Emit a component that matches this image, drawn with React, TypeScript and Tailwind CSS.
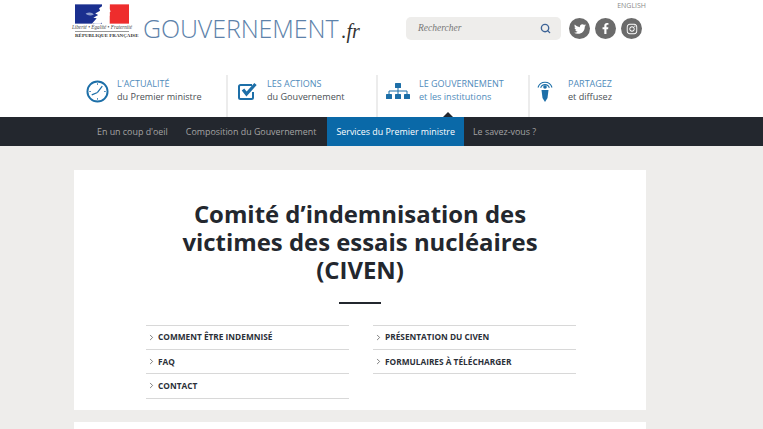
import { ChevronRight, Search } from 'lucide-react';
import { FaFacebookF, FaInstagram, FaTwitter } from 'react-icons/fa';
import type { ReactNode } from 'react';

const sans = "font-['Open_Sans',sans-serif]";

function ClockIcon() {
    return (
        <svg width="23" height="23" viewBox="0 0 24 24" fill="none" stroke="#1d6fa8">
            <circle cx="12" cy="12" r="10.5" strokeWidth="2" />
            <path d="M12 13 L17 6.500 M12 13 L6 15.500" strokeWidth="1.300" />
            <path d="M12 3.500v1.500M12 19v1.500M3.500 12h1.500M19 12h1.500" strokeWidth="1" />
        </svg>
    );
}

function CheckIcon() {
    return (
        <svg width="19" height="18" viewBox="0 0 19 18" fill="none">
            <path d="M15 10v5.500a1.500 1.500 0 0 1-1.500 1.500H2.500A1.500 1.500 0 0 1 1 15.500V4.500A1.500 1.500 0 0 1 2.500 3H14" stroke="#1d6fa8" strokeWidth="2" />
            <path d="M5 7.500 8.500 12 17.500 2" stroke="#1d6fa8" strokeWidth="3.200" />
        </svg>
    );
}

function TreeIcon() {
    return (
        <svg width="24" height="16" viewBox="0 0 24 16" fill="#1d6fa8">
            <rect x="9" y="0" width="6" height="5" rx="0.500" />
            <rect x="0" y="11" width="6" height="5" rx="0.500" />
            <rect x="9" y="11" width="6" height="5" rx="0.500" />
            <rect x="18" y="11" width="6" height="5" rx="0.500" />
            <path d="M12 5v6M3 11V8H21V11" fill="none" stroke="#1d6fa8" />
        </svg>
    );
}

function ShareIcon() {
    return (
        <svg width="16" height="22" viewBox="0 0 16 22" fill="none" stroke="#1d6fa8">
            <path d="M1 7.500a7.300 7.300 0 0 1 14 0" strokeWidth="1.100" />
            <path d="M3.700 7.800a4.500 4.500 0 0 1 8.600 0" strokeWidth="1.100" />
            <circle cx="8" cy="7" r="1.800" fill="#1d6fa8" stroke="none" />
            <path d="M4.500 10h7L10.500 18 8 22 5.500 18Z" fill="#1d6fa8" stroke="none" />
        </svg>
    );
}

function Logo() {
    return (
        <div className="flex w-[56px] flex-col items-center">
            <svg width="54" height="20" viewBox="0 0 56 20">
                <rect width="56" height="20" fill="#fff" />
                <rect width="28" height="20" fill="#1a2f8f" />
                <rect x="36" width="20" height="20" fill="#ee2d2d" />
                <path d="M28 0h8l-.5 4 1.500 3.500-1.500 1 .5 3-3.500 1.500-1 3-5 4h-9l5-5.500-3.500-.5 5-3-3-1.500 5-3-1-2.500 3-2Z" fill="#fff" />
                <path d="M11 9.500c4-2 7-1 8.500 1-3 1.500-6 1.500-8.500-1Z" fill="#8d9ccc" />
            </svg>
            <div className="mt-[1px] text-[5.200px] leading-[5px] whitespace-nowrap font-['Liberation_Serif',serif] italic text-[#444]">
                Liberté • Égalité • Fraternité
            </div>
            <div className="mt-[1px] w-[54px] border-t border-[#999] pt-[1px] text-center text-[5px] leading-[6px] whitespace-nowrap font-['Liberation_Serif',serif] font-bold text-[#333]">
                RÉPUBLIQUE FRANÇAISE
            </div>
        </div>
    );
}

function NavItem({ icon, top, bottom, width, iconBox, active, bottomBlue }: { icon: ReactNode; top: string; bottom: string; width: string; iconBox: string; active?: boolean; bottomBlue?: boolean }) {
    return (
        <div className={'relative flex h-[42px] items-start ' + width}>
            <div className={'flex h-[32px] shrink-0 items-center justify-end ' + iconBox}>{icon}</div>
            <div className="text-[9.100px] leading-[12.500px]">
                <div className="pt-[3px] text-[9px] text-[#4f8bbb]">{top}</div>
                <div className={bottomBlue ? 'text-[#4f8bbb]' : 'text-[#4a4f55]'}>{bottom}</div>
            </div>
            {active && (
                <div className="absolute bottom-0 left-[65px] h-0 w-0 border-x-[5px] border-b-[5px] border-x-transparent border-b-[#23272e]" />
            )}
        </div>
    );
}

function LinkRow({ label }: { label: string }) {
    return (
        <div className="flex h-[24.200px] items-center border-b border-[#d8d8d8] pl-[1px]">
            <ChevronRight className="mr-[2px] h-[9px] w-[9px] text-[#555]" strokeWidth={2} />
            <span className="text-[8.300px] font-bold text-[#2b3038]">{label}</span>
        </div>
    );
}

export default function App() {
    return (
        <div className={'h-[429px] overflow-hidden bg-[#eeedeb] ' + sans}>
            <header className="h-[117px] bg-white">
                <div className="ml-[74px] w-[572px]">
                    <div className="flex h-[75px] items-start">
                        <div className="pt-[4px]">
                            <Logo />
                        </div>
                        <div className="ml-[13px] flex w-[263px] items-baseline pt-[10px]">
                            <span className="text-[25px] leading-[36px] font-light tracking-[-0.1px] text-[#5d82aa]">GOUVERNEMENT</span>
                            <span className="ml-[3px] font-['Liberation_Serif',serif] text-[20px] italic text-[#333]">.fr</span>
                        </div>
                        <div className="flex-1">
                            <div className="pt-[2px] text-right text-[7px] leading-[8px] text-[#8a8a8a]">ENGLISH</div>
                            <div className="mt-[7px] flex items-center">
                                <div className="flex h-[23px] w-[155px] items-center justify-between rounded-[5px] bg-[#eeedeb] pr-[10px] pl-[12px]">
                                    <span className="font-['Liberation_Serif',serif] text-[9.500px] italic text-[#777]">Rechercher</span>
                                    <Search className="h-[11px] w-[11px] text-[#3d6396]" strokeWidth={3} />
                                </div>
                                <div className="ml-[8px] flex gap-[5px]">
                                    <div className="flex h-[21px] w-[21px] items-center justify-center rounded-full bg-[#6b6b6b] text-white">
                                        <FaTwitter size={12} />
                                    </div>
                                    <div className="flex h-[21px] w-[21px] items-center justify-center rounded-full bg-[#6b6b6b] text-white">
                                        <FaFacebookF size={11} />
                                    </div>
                                    <div className="flex h-[21px] w-[21px] items-center justify-center rounded-full bg-[#6b6b6b] text-white">
                                        <FaInstagram size={12} />
                                    </div>
                                </div>
                            </div>
                        </div>
                    </div>
                    <div className="flex">
                        <NavItem icon={<ClockIcon />} iconBox="w-[43px] pr-[8px]" top="L'ACTUALITÉ" bottom="du Premier ministre" width="w-[154px] border-r-2 border-[#ececec]" />
                        <NavItem icon={<CheckIcon />} iconBox="w-[39px] pr-[10px]" top="LES ACTIONS" bottom="du Gouvernement" width="w-[150px] border-r-2 border-[#ececec]" />
                        <NavItem icon={<TreeIcon />} iconBox="w-[41px] pr-[9px]" top="LE GOUVERNEMENT" bottom="et les institutions" width="w-[152px] border-r-2 border-[#ececec]" active bottomBlue />
                        <NavItem icon={<ShareIcon />} iconBox="w-[38px] pr-[15px]" top="PARTAGEZ" bottom="et diffusez" width="w-[116px]" />
                    </div>
                </div>
            </header>
            <nav className="h-[29px] bg-[#23272e]">
                <div className="ml-[74px] flex h-full w-[572px] items-center pl-[14px] text-[8.900px] text-[#a3a3a3]">
                    <span className="px-[9px]">En un coup d'oeil</span>
                    <span className="mr-[2px] px-[9px]">Composition du Gouvernement</span>
                    <span className="flex h-full items-center bg-[#0a69a8] px-[9px] text-white">Services du Premier ministre</span>
                    <span className="px-[9px]">Le savez-vous ?</span>
                </div>
            </nav>
            <main className="ml-[74px] w-[572px] pt-[24px]">
                <section className="h-[240px] bg-white pt-[30px]">
                    <h1 className="text-center text-[23.900px] leading-[28px] font-bold text-[#23272e]">
                        Comité d’indemnisation des
                        <br />
                        victimes des essais nucléaires
                        <br />
                        (CIVEN)
                    </h1>
                    <div className="mx-auto mt-[18px] h-[2px] w-[42px] bg-[#23272e]" />
                    <div className="mt-[21px] flex gap-[24px] pl-[72px]">
                        <div className="w-[203px] border-t border-[#d8d8d8]">
                            <LinkRow label="COMMENT ÊTRE INDEMNISÉ" />
                            <LinkRow label="FAQ" />
                            <LinkRow label="CONTACT" />
                        </div>
                        <div className="w-[203px] self-start border-t border-[#d8d8d8]">
                            <LinkRow label="PRÉSENTATION DU CIVEN" />
                            <LinkRow label="FORMULAIRES À TÉLÉCHARGER" />
                        </div>
                    </div>
                </section>
                <section className="mt-[12px] h-[40px] bg-white" />
            </main>
        </div>
    );
}
